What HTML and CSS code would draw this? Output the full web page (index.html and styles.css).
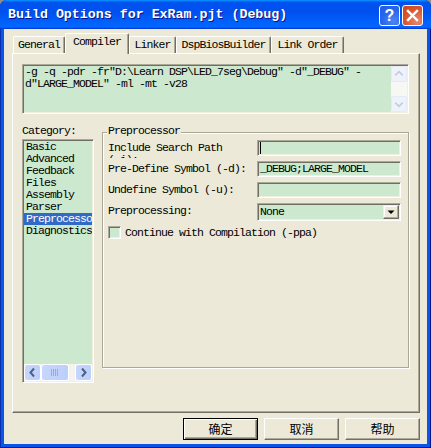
FILE: index.html
```html
<!DOCTYPE html>
<html>
<head>
<meta charset="utf-8">
<title>Build Options</title>
<link rel="stylesheet" href="styles.css">
</head>
<body>
<div class="window">
  <div class="titlebar">
    <span class="title">Build Options for ExRam.pjt (Debug)</span>
    <div class="tb-buttons">
      <div class="tb-btn tb-help">?</div>
      <div class="tb-btn tb-close"><svg width="19" height="19" viewBox="0 0 19 19"><path d="M5 5L14 14M14 5L5 14" stroke="#fff" stroke-width="2.4" stroke-linecap="square"/></svg></div>
    </div>
  </div>
  <div class="client">
    <div class="tabs">
      <div class="tab tab-general">General</div>
      <div class="tab tab-compiler active">Compiler</div>
      <div class="tab tab-linker">Linker</div>
      <div class="tab tab-dsp">DspBiosBuilder</div>
      <div class="tab tab-order">Link Order</div>
    </div>
    <div class="panel">
      <div class="options sunken">
        <div class="options-text">-g -q -pdr -fr"D:\Learn DSP\LED_7seg\Debug" -d"_DEBUG" -<br>d"LARGE_MODEL" -ml -mt -v28</div>
        <div class="vscroll">
          <div class="vs-btn"><svg width="15" height="16" viewBox="0 0 15 16"><path d="M3.5 9.5L7.5 5.5L11.5 9.5" fill="none" stroke="#c3cbdc" stroke-width="1.6"/></svg></div>
          <div class="vs-track"></div>
          <div class="vs-btn"><svg width="15" height="16" viewBox="0 0 15 16"><path d="M3.5 6.5L7.5 10.5L11.5 6.5" fill="none" stroke="#c3cbdc" stroke-width="1.6"/></svg></div>
        </div>
      </div>
      <div class="lower">
        <div class="category">
          <div class="cat-label">Category:</div>
          <div class="listbox sunken">
            <div class="list-items">
              <div class="item">Basic</div>
              <div class="item">Advanced</div>
              <div class="item">Feedback</div>
              <div class="item">Files</div>
              <div class="item">Assembly</div>
              <div class="item">Parser</div>
              <div class="item selected">Preprocessor</div>
              <div class="item">Diagnostics</div>
            </div>
            <div class="hscroll">
              <div class="hs-btn"><svg width="15" height="15" viewBox="0 0 15 15"><path d="M9 3.5L5.5 7.5L9 11.5" fill="none" stroke="#4d6185" stroke-width="2"/></svg></div>
              <div class="hs-thumb"><svg width="8" height="7" viewBox="0 0 8 7"><path d="M0.5 0V7M2.5 0V7M4.5 0V7M6.5 0V7" stroke="#8faaf0" stroke-width="1"/></svg></div>
              <div class="hs-track"></div>
              <div class="hs-btn"><svg width="15" height="15" viewBox="0 0 15 15"><path d="M6 3.5L9.5 7.5L6 11.5" fill="none" stroke="#4d6185" stroke-width="2"/></svg></div>
            </div>
          </div>
        </div>
        <div class="group">
          <div class="group-title">Preprocessor</div>
          <div class="form">
            <div class="label label-clip">Include Search Path <span class="nowrap">(-i):</span></div>
            <div class="field sunken"><span class="caret"></span></div>
            <div class="label">Pre-Define Symbol (-d):</div>
            <div class="field sunken">_DEBUG;LARGE_MODEL</div>
            <div class="label">Undefine Symbol (-u):</div>
            <div class="field sunken"></div>
            <div class="label">Preprocessing:</div>
            <div class="combo sunken">
              <span class="combo-text">None</span>
              <div class="combo-btn"><svg width="14" height="12" viewBox="0 0 14 12"><path d="M3.5 4.5H10.5L7 8Z" fill="#000"/></svg></div>
            </div>
          </div>
          <div class="check-row">
            <div class="checkbox sunken"></div>
            <span class="check-label">Continue with Compilation (-ppa)</span>
          </div>
        </div>
      </div>
    </div>
    <div class="buttons">
      <div class="btn btn-default">确定</div>
      <div class="btn">取消</div>
      <div class="btn">帮助</div>
    </div>
  </div>
</div>
</body>
</html>
```

FILE: styles.css
```css
* { box-sizing: border-box; }
html, body { margin: 0; padding: 0; }
body {
  width: 431px;
  height: 448px;
  overflow: hidden;
  background: #8d8d8d;
  font-family: "Liberation Mono", "DejaVu Sans Mono", monospace;
  font-size: 11.5px;
  letter-spacing: -0.9px;
  line-height: 12px;
  color: #000;
}
.window {
  width: 431px;
  height: 448px;
  border-radius: 7px 7px 0 0;
  overflow: hidden;
  background: #0a55e4;
  box-shadow: inset 1px 0 #0a2fb0, inset -1px 0 #00138c, inset 0 -1px #00138c;
  display: flex;
  flex-direction: column;
}
.titlebar {
  height: 29px;
  flex: none;
  display: flex;
  align-items: center;
  padding: 0 8px 0 8px;
  background: linear-gradient(180deg, #0997ff, #0053ee 8%, #0050ee 40%, #06f 88%, #06f 93%, #005bff 95%, #003dd7 96%, #003dd7);
}
.title {
  color: #fff;
  font-family: "Liberation Mono", monospace;
  font-weight: bold;
  font-size: 13.3px;
  letter-spacing: 0;
  line-height: 16px;
  text-shadow: 1px 1px #0f1089;
  padding-top: 1px;
}
.tb-buttons {
  margin-left: auto;
  display: flex;
  gap: 2px;
  padding-top: 1px;
}
.tb-btn {
  width: 21px;
  height: 21px;
  border: 1px solid #fff;
  border-radius: 3px;
  display: flex;
  align-items: center;
  justify-content: center;
}
.tb-help {
  background: radial-gradient(circle at 70% 80%, #4a86f5 0%, #2a66ea 55%, #1f5be2 100%);
  color: #fff;
  font-family: "Liberation Sans", sans-serif;
  font-weight: bold;
  font-size: 16px;
  letter-spacing: 0;
  line-height: 19px;
}
.tb-close {
  background: radial-gradient(circle at 75% 80%, #e98a6f 0%, #d9582f 55%, #cc4419 100%);
}
.tb-close svg { display: block; }

.client {
  flex: none;
  height: 415px;
  margin: 0 4px;
  background: #ece9d8;
  display: flex;
  flex-direction: column;
}

/* tabs */
.tabs {
  display: flex;
  align-items: flex-end;
  height: 21px;
  margin: 4px 0 -1px 9px;
  position: relative;
  z-index: 2;
}
.tab {
  height: 17px;
  margin-bottom: 1px;
  border-top: 1px solid #fff;
  border-left: 1px solid #fff;
  border-right: 1px solid #716f64;
  box-shadow: inset -1px 0 #aca899;
  border-radius: 2px 2px 0 0;
  padding-top: 2px;
  text-align: center;
  background: #ece9d8;
  white-space: nowrap;
}
.tab.active {
  height: 21px;
  margin-bottom: 0;
}
.tab-general { width: 52px; }
.tab-compiler { width: 64px; }
.tab-linker { width: 47px; }
.tab-dsp { width: 95px; }
.tab-order { width: 73px; }

/* panel */
.panel {
  margin-left: 8px;
  width: 408px;
  height: 360px;
  flex: none;
  border-top: 1px solid #fff;
  border-left: 1px solid #fff;
  border-right: 1px solid #716f64;
  border-bottom: 1px solid #716f64;
  box-shadow: inset -1px -1px #aca899;
  padding: 10px 10px 0 9px;
}
.sunken {
  border: 1px solid;
  border-color: #aca899 #fff #fff #aca899;
  box-shadow: inset 1px 1px #716f64, inset -1px -1px #f1efe2;
}
.options {
  height: 50px;
  display: flex;
  padding: 1px;
  background: #cce8cf;
}
.options-text {
  flex: 1;
  padding-left: 1px;
  white-space: nowrap;
  overflow: hidden;
}
.vscroll {
  width: 16px;
  display: flex;
  flex-direction: column;
  background: #f7f7f3;
}
.vs-btn {
  height: 16px;
  border: 1px solid #e5ebf6;
  border-radius: 2px;
  background: #eef2fb;
  display: flex;
  align-items: center;
  justify-content: center;
}
.vs-btn svg { display: block; }
.vs-track { flex: 1; }

.lower {
  display: flex;
  gap: 8px;
  margin-top: 11px;
}
.category {
  width: 72px;
  flex: none;
}
.cat-label {
  height: 12px;
  margin-bottom: 2px;
}
.listbox {
  height: 244px;
  padding: 1px;
  background: #cce8cf;
  display: flex;
  flex-direction: column;
}
.list-items {
  flex: 1;
  overflow: hidden;
}
.item {
  height: 12px;
  padding-left: 2px;
  white-space: nowrap;
}
.item.selected {
  background: #316ac5;
  color: #fff;
}
.hscroll {
  height: 17px;
  display: flex;
  background: #f4f3ee;
}
.hs-btn, .hs-thumb {
  height: 17px;
  border: 1px solid #fff;
  border-radius: 3px;
  background: linear-gradient(90deg, #c6d6fc, #bccffb);
  display: flex;
  align-items: center;
  justify-content: center;
}
.hs-btn { width: 17px; }
.hs-btn svg, .hs-thumb svg { display: block; }
.hs-thumb { width: 28px; }
.hs-track { flex: 1; }

/* group box */
.group {
  flex: 1;
  margin-top: 7px;
  height: 236px;
  border: 1px solid #aca899;
  box-shadow: inset 1px 1px #fff, 1px 1px #fff;
  padding: 0 6px 0 5px;
  display: flex;
  flex-direction: column;
}
.group-title {
  align-self: flex-start;
  margin-top: -8px;
  margin-left: -1px;
  padding: 0 1px;
  height: 12px;
  background: #ece9d8;
}
.form {
  margin-top: 3px;
  display: grid;
  grid-template-columns: 149px 144px;
  grid-template-rows: 21px 21px 21px 18px;
}
.label {
  padding-top: 2px;
  height: 18px;
  overflow: hidden;
  white-space: nowrap;
}
.label-clip {
  white-space: normal;
  width: 145px;
}
.nowrap { white-space: nowrap; }
.field {
  height: 16px;
  padding: 1px 2px;
  background: #cce8cf;
  white-space: nowrap;
  display: flex;
  align-items: flex-start;
}
.caret {
  display: block;
  width: 1px;
  height: 12px;
  background: #000;
}
.combo {
  height: 18px;
  padding: 1px 1px 1px 2px;
  background: #cce8cf;
  display: flex;
}
.combo-text {
  flex: 1;
  padding-top: 1px;
}
.combo-btn {
  width: 16px;
  height: 14px;
  border: 1px solid;
  border-color: #f1efe2 #716f64 #716f64 #f1efe2;
  box-shadow: inset -1px -1px #aca899, inset 1px 1px #fff;
  background: #ece9d8;
  display: flex;
  align-items: center;
  justify-content: center;
}
.combo-btn svg { display: block; }
.check-row {
  margin-top: 5px;
  display: flex;
  align-items: flex-start;
}
.checkbox {
  width: 13px;
  height: 13px;
  flex: none;
  background: #cce8cf;
}
.check-label {
  margin-left: 4px;
  margin-top: 1px;
  white-space: nowrap;
}

/* dialog buttons */
.buttons {
  display: flex;
  justify-content: flex-end;
  gap: 6px;
  margin-top: 5px;
  padding-right: 7px;
}
.btn {
  width: 75px;
  height: 22px;
  border: 1px solid;
  border-color: #fff #716f64 #716f64 #fff;
  box-shadow: inset -1px -1px #aca899;
  font-family: "Noto Sans CJK SC", sans-serif;
  font-size: 12px;
  letter-spacing: 0;
  line-height: 19px;
  text-align: center;
}
.btn-default {
  border-color: #000;
  box-shadow: inset 1px 1px #fff, inset -1px -1px #716f64, inset -2px -2px #aca899;
}
```
